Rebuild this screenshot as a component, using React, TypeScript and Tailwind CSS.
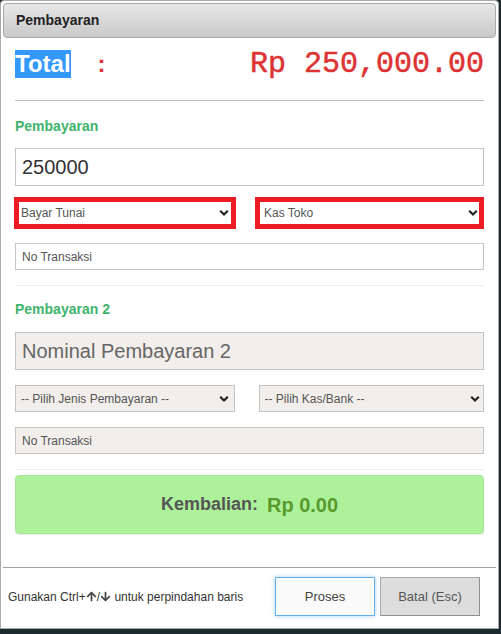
import React from "react";
import { FaArrowUp, FaArrowDown } from "react-icons/fa";

const Chevron = () => (
  <svg width="10" height="7" viewBox="0 0 10 7" className="shrink-0">
    <path d="M1.2 1.2 L5 5 L8.8 1.2" fill="none" stroke="#222" strokeWidth="2.2" />
  </svg>
);

function Select({ text, className, chevRight }: { text: string; className: string; chevRight: string }) {
  return (
    <div className={`relative flex items-center ${className}`}>
      <span className="truncate">{text}</span>
      <span className={`absolute top-1/2 -translate-y-1/2 ${chevRight}`}>
        <Chevron />
      </span>
    </div>
  );
}

export default function App() {
  return (
    <div className="w-[501px] h-[634px] bg-[#1d2a31] overflow-hidden" style={{ fontFamily: '"Liberation Sans", Arial, sans-serif' }}>
      <div className="w-[499px] h-[629px] bg-white border border-[#a9a9a9] rounded-t-[4px] p-[2px] flex flex-col">
        {/* title bar */}
        <div className="h-[35px] shrink-0 rounded-[4px] border border-[#aaaaaa] bg-gradient-to-b from-[#e8e8e8] to-[#c9c9c9] flex items-center pl-[12px] text-[14px] font-bold text-[#222]">
          Pembayaran
        </div>

        {/* body */}
        <div className="flex-1 px-[12px] flex flex-col">
          <div className="mt-[12px] h-[28px] flex items-baseline">
            <span className="bg-[#3399ff] text-white text-[24px] leading-[28px] font-bold">Total</span>
            <span className="ml-[27px] text-[#dd3333] text-[24px] leading-[28px] font-bold">:</span>
            <span
              className="ml-auto text-[#dd3333] text-[30px] leading-[28px] [-webkit-text-stroke:0.5px_#dd3333]"
              style={{ fontFamily: '"Liberation Mono", "Courier New", monospace' }}
            >
              Rp 250,000.00
            </span>
          </div>

          <div className="mt-[22px] h-px bg-[#bdbdbd]" />

          <div className="mt-[15px] h-[20px] leading-[20px] text-[14px] font-bold text-[#3fb46c]">Pembayaran</div>

          <div className="mt-[12px] h-[38px] border border-[#c4c4c4] flex items-center px-[6px] text-[20px] text-[#333]">
            250000
          </div>

          <div className="mt-[11px] -ml-[1px] h-[32px] flex gap-[19px] text-[12px] text-[#555]">
            <Select
              text="Bayar Tunai"
              className="w-[223px] h-[32px] border-[5px] border-[#ed1c24] bg-white pl-[2px]"
              chevRight="right-[2px]"
            />
            <Select
              text="Kas Toko"
              className="w-[230px] h-[32px] border-[5px] border-[#ed1c24] bg-white pl-[4px]"
              chevRight="right-[1px]"
            />
          </div>

          <div className="mt-[14px] h-[27px] border border-[#c4c4c4] flex items-center px-[6px] text-[12px] text-[#555]">
            No Transaksi
          </div>

          <div className="mt-[15px] h-px bg-[#eaeaea]" />

          <div className="mt-[13px] h-[20px] leading-[20px] text-[14px] font-bold text-[#3fb46c]">Pembayaran 2</div>

          <div className="mt-[13px] h-[38px] border border-[#c4c4c4] bg-[#f2eeeb] flex items-center px-[6px] text-[20px] text-[#666]">
            Nominal Pembayaran 2
          </div>

          <div className="mt-[15px] h-[27px] flex gap-[24px] text-[12px] text-[#555]">
            <Select
              text="-- Pilih Jenis Pembayaran --"
              className="w-[220px] h-[27px] border border-[#c4c4c4] bg-[#f2eeeb] pl-[5px]"
              chevRight="right-[5px]"
            />
            <Select
              text="-- Pilih Kas/Bank --"
              className="w-[226px] h-[27px] border border-[#c4c4c4] bg-[#f2eeeb] pl-[5px]"
              chevRight="right-[3px]"
            />
          </div>

          <div className="mt-[15px] h-[27px] border border-[#c4c4c4] bg-[#f2eeeb] flex items-center px-[6px] text-[12px] text-[#555]">
            No Transaksi
          </div>

          <div className="mt-[15px] h-px bg-[#eaeaea]" />

          <div className="mt-[5px] h-[59px] rounded-[4px] bg-[#adf29b] border border-[#a6e896] shadow-[0_1px_1px_rgba(0,0,0,0.08)] flex items-center justify-center gap-[9px] font-bold">
            <span className="text-[18px] text-[#555]">Kembalian:</span>
            <span className="text-[20px] text-[#5a9a2c]">Rp 0.00</span>
          </div>
        </div>

        {/* footer */}
        <div className="h-[59px] shrink-0 border-t border-[#a0a0a0] flex items-start pt-[9px] pl-[5px] pr-[16px]">
          <div className="h-[39px] flex items-center text-[12px] text-[#333]">
            Gunakan Ctrl+
            <FaArrowUp className="text-[#444] w-[11px] h-[11px]" />
            /
            <FaArrowDown className="text-[#444] w-[11px] h-[11px]" />
            &nbsp;untuk perpindahan baris
          </div>
          <div className="ml-auto flex gap-[5px]">
            <div className="w-[100px] h-[39px] bg-[#fafafa] border border-[#66afe9] shadow-[0_0_4px_rgba(102,175,233,0.6)] flex items-center justify-center text-[13px] text-[#444]">
              Proses
            </div>
            <div className="w-[100px] h-[39px] bg-[#dddddd] border border-[#aaaaaa] border-r-[#8f8f8f] border-b-[#8f8f8f] flex items-center justify-center text-[13px] text-[#555]">
              Batal (Esc)
            </div>
          </div>
        </div>
      </div>
    </div>
  );
}
